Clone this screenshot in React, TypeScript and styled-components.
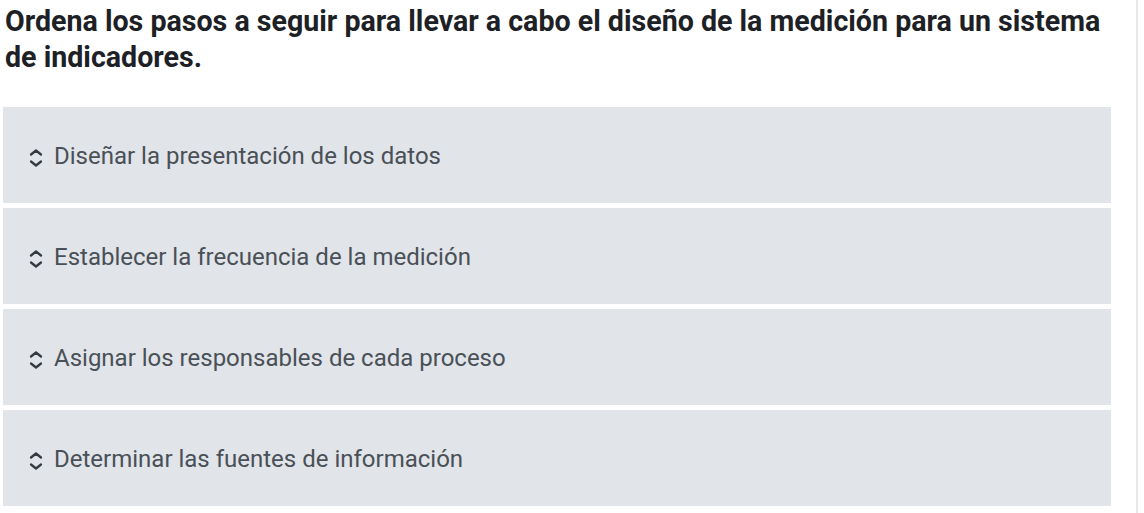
import React from "react";
import styled, { createGlobalStyle } from "styled-components";

const Global = createGlobalStyle`
  html, body { margin: 0; padding: 0; background: #ffffff; }
  body { font-family: Roboto, "Noto Sans", "Liberation Sans", sans-serif; }
`;

const Page = styled.div`
  width: 1138px;
  height: 513px;
  box-sizing: border-box;
  padding-left: 3px;
  border-right: 2px solid #e6e8eb;
  display: flex;
  flex-direction: column;
`;

const Question = styled.h2`
  margin: 0;
  padding: 3px 0 0 2px;
  width: 1125px;
  font-family: Roboto, "Liberation Sans", sans-serif;
  font-weight: 700;
  font-size: 28.6px;
  line-height: 36px;
  color: #1d2125;
`;

const List = styled.ul`
  list-style: none;
  margin: 32px 0 0 0;
  padding: 0;
  width: 1108px;
  display: flex;
  flex-direction: column;
  gap: 5px;
`;

const Item = styled.li`
  height: 96px;
  box-sizing: border-box;
  background: #e1e4e8;
  display: flex;
  align-items: center;
  gap: 9px;
  padding: 2px 0 0 24px;
  font-family: Roboto, "Liberation Sans", sans-serif;
  font-size: 24px;
  color: #495057;
`;

const Handle = styled.svg`
  width: 18px;
  height: 18px;
  flex: none;
  margin-top: 3px;
`;

const Label = styled.span`
  line-height: 28px;
`;

const UpDown = () => (
  <Handle viewBox="0 0 18 18" fill="none" stroke="#343a40" strokeWidth="2.3" strokeLinecap="round" strokeLinejoin="round">
    <polyline points="4,5.5 9,1.5 14,5.5" />
    <polyline points="4,12.5 9,16.5 14,12.5" />
  </Handle>
);

const steps = [
  "Diseñar la presentación de los datos",
  "Establecer la frecuencia de la medición",
  "Asignar los responsables de cada proceso",
  "Determinar las fuentes de información",
];

export default function App() {
  return (
    <>
      <Global />
      <Page>
        <Question>
          Ordena los pasos a seguir para llevar a cabo el diseño de la medición para un sistema de indicadores.
        </Question>
        <List>
          {steps.map((s) => (
            <Item key={s}>
              <UpDown />
              <Label>{s}</Label>
            </Item>
          ))}
        </List>
      </Page>
    </>
  );
}
